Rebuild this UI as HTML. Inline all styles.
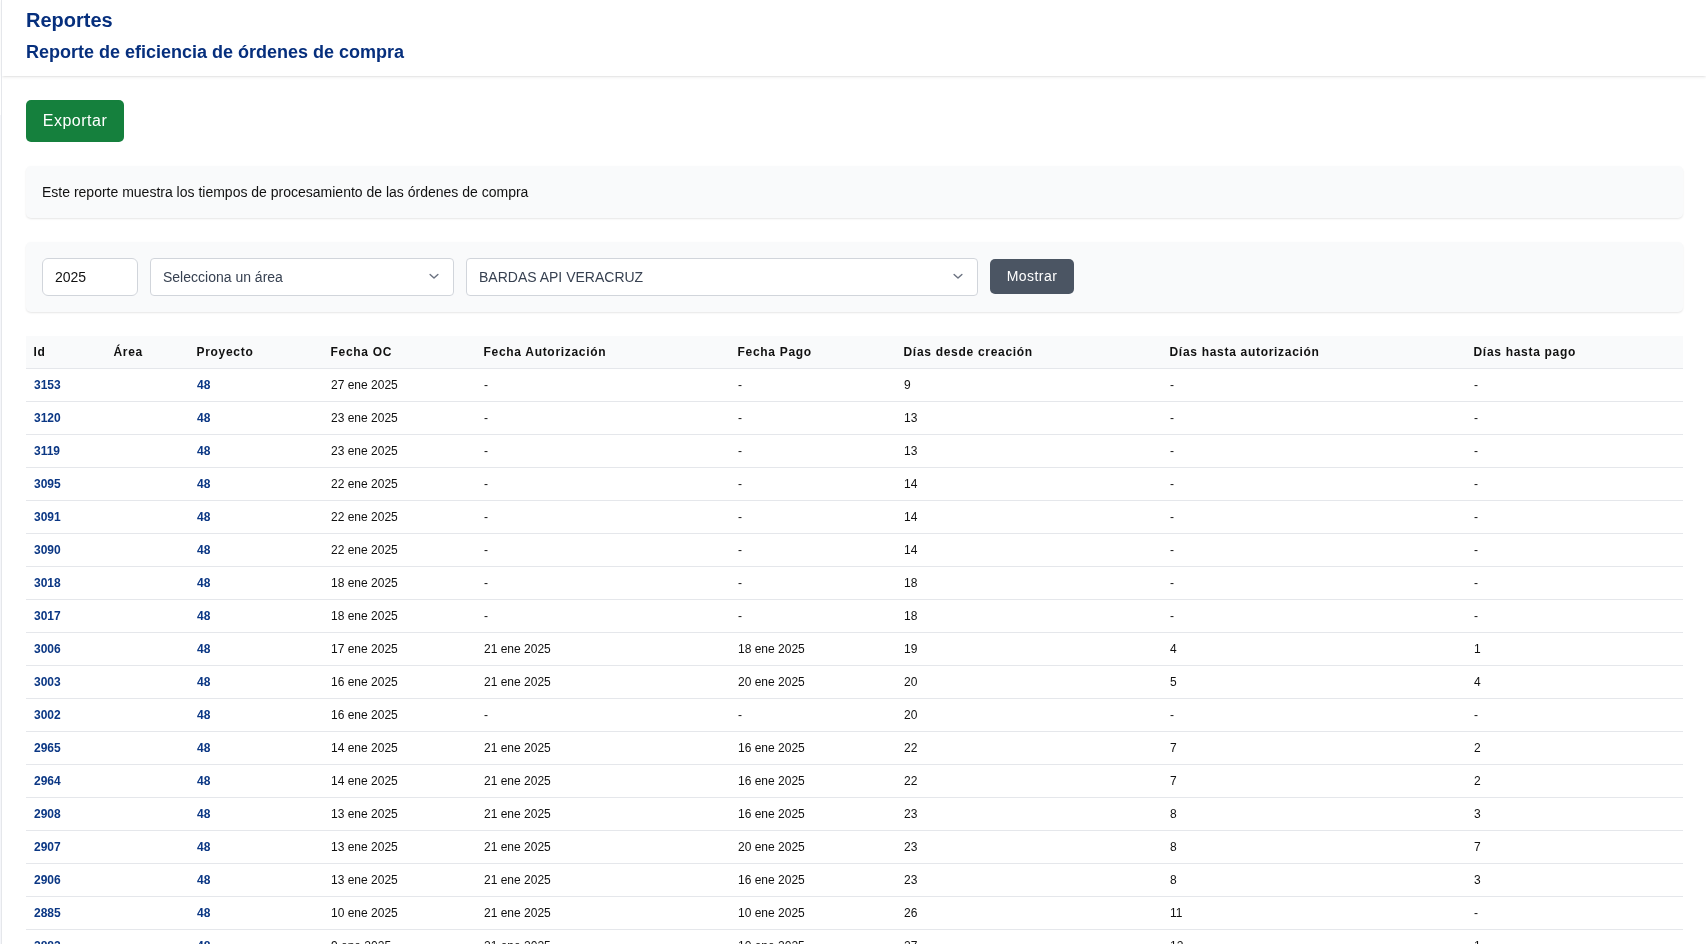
<!DOCTYPE html>
<html lang="es"><head><meta charset="utf-8"><title>Reportes</title>
<style>
*{box-sizing:border-box}
html,body{margin:0;padding:0}body{will-change:transform}
body{width:1706px;height:944px;overflow:hidden;background:#fff;font-family:"Liberation Sans",sans-serif;color:#111827;position:relative}
.side{position:absolute;left:1px;top:0;width:1px;height:944px;background:#e5e7eb;z-index:3}
.hdr{position:absolute;left:2px;top:0;right:0;height:76px;background:#fff;box-shadow:0 1px 3px 0 rgba(0,0,0,0.1),0 1px 2px -1px rgba(0,0,0,0.1)}
.edge{position:absolute;left:0;top:115px;width:1px;height:829px;background:#f5f6fa;z-index:3}
.h1{position:absolute;left:24px;top:8px;margin:0;font-size:20px;font-weight:bold;color:#062f7d;line-height:24px}
.h2{position:absolute;left:24px;top:41px;margin:0;font-size:18px;font-weight:bold;color:#062f7d;line-height:22px}
.btn-exp{position:absolute;left:26px;top:100px;width:98px;height:42px;background:#15803d;color:#fff;border-radius:5px;font-size:16px;line-height:42px;text-align:center;letter-spacing:0.5px}
.info{position:absolute;left:26px;top:166px;width:1657px;height:52px;background:#f9fafb;border-radius:5px;box-shadow:0 1px 2px rgba(0,0,0,0.1);font-size:14px;line-height:52px;padding-left:16px;color:#111}
.filt{position:absolute;left:26px;top:242px;width:1657px;height:70px;background:#f9fafb;border-radius:5px;box-shadow:0 1px 2px rgba(0,0,0,0.1)}
.ctl{position:absolute;top:16px;height:38px;background:#fff;border:1px solid #d1d5db;border-radius:6px;font-size:14px;line-height:36px;padding-left:12px;color:#111}
.sel{color:#374151;border-radius:4px}
.chev{position:absolute;right:13.6px;top:14px}
.btn-m{position:absolute;left:964px;top:17px;width:84px;height:35px;background:#4b5563;color:#fff;border-radius:5px;font-size:14px;line-height:35px;text-align:center;letter-spacing:0.45px}
table{position:absolute;left:26px;top:336px;width:1657px;border-collapse:collapse;table-layout:fixed;font-size:12px}
th{background:#f9fafb;text-align:left;font-weight:bold;letter-spacing:0.7px;padding:0 8px 0 7.5px;height:32px;border-bottom:1px solid #e5e7eb;color:#111}
td{padding:0 8px 0 8px;height:33px;border-bottom:1px solid #e5e7eb;color:#111;white-space:nowrap}
td a{color:#0b3784;font-weight:bold}
</style></head><body>
<div class="side"></div><div class="edge"></div>
<div class="hdr">
<div class="h1">Reportes</div>
<div class="h2">Reporte de eficiencia de órdenes de compra</div>
</div>
<div class="btn-exp">Exportar</div>
<div class="info">Este reporte muestra los tiempos de procesamiento de las órdenes de compra</div>
<div class="filt">
<div class="ctl" style="left:16px;width:96px">2025</div>
<div class="ctl sel" style="left:124px;width:304px">Selecciona un área<svg class="chev" width="10" height="7" viewBox="0 0 10 7"><path d="M1.1 1.4L5 5.1L8.9 1.4" fill="none" stroke="#6b7280" stroke-width="1.4" stroke-linecap="round" stroke-linejoin="round"/></svg></div>
<div class="ctl sel" style="left:440px;width:512px">BARDAS API VERACRUZ<svg class="chev" width="10" height="7" viewBox="0 0 10 7"><path d="M1.1 1.4L5 5.1L8.9 1.4" fill="none" stroke="#6b7280" stroke-width="1.4" stroke-linecap="round" stroke-linejoin="round"/></svg></div>
<div class="btn-m">Mostrar</div>
</div>
<table>
<colgroup><col style="width:80px"><col style="width:83px"><col style="width:134px"><col style="width:153px"><col style="width:254px"><col style="width:166px"><col style="width:266px"><col style="width:304px"><col style="width:217px"></colgroup>
<thead><tr><th>Id</th><th>Área</th><th>Proyecto</th><th>Fecha OC</th><th>Fecha Autorización</th><th>Fecha Pago</th><th>Días desde creación</th><th>Días hasta autorización</th><th>Días hasta pago</th></tr></thead>
<tbody>
<tr><td><a>3153</a></td><td></td><td><a>48</a></td><td>27 ene 2025</td><td>-</td><td>-</td><td>9</td><td>-</td><td>-</td></tr>
<tr><td><a>3120</a></td><td></td><td><a>48</a></td><td>23 ene 2025</td><td>-</td><td>-</td><td>13</td><td>-</td><td>-</td></tr>
<tr><td><a>3119</a></td><td></td><td><a>48</a></td><td>23 ene 2025</td><td>-</td><td>-</td><td>13</td><td>-</td><td>-</td></tr>
<tr><td><a>3095</a></td><td></td><td><a>48</a></td><td>22 ene 2025</td><td>-</td><td>-</td><td>14</td><td>-</td><td>-</td></tr>
<tr><td><a>3091</a></td><td></td><td><a>48</a></td><td>22 ene 2025</td><td>-</td><td>-</td><td>14</td><td>-</td><td>-</td></tr>
<tr><td><a>3090</a></td><td></td><td><a>48</a></td><td>22 ene 2025</td><td>-</td><td>-</td><td>14</td><td>-</td><td>-</td></tr>
<tr><td><a>3018</a></td><td></td><td><a>48</a></td><td>18 ene 2025</td><td>-</td><td>-</td><td>18</td><td>-</td><td>-</td></tr>
<tr><td><a>3017</a></td><td></td><td><a>48</a></td><td>18 ene 2025</td><td>-</td><td>-</td><td>18</td><td>-</td><td>-</td></tr>
<tr><td><a>3006</a></td><td></td><td><a>48</a></td><td>17 ene 2025</td><td>21 ene 2025</td><td>18 ene 2025</td><td>19</td><td>4</td><td>1</td></tr>
<tr><td><a>3003</a></td><td></td><td><a>48</a></td><td>16 ene 2025</td><td>21 ene 2025</td><td>20 ene 2025</td><td>20</td><td>5</td><td>4</td></tr>
<tr><td><a>3002</a></td><td></td><td><a>48</a></td><td>16 ene 2025</td><td>-</td><td>-</td><td>20</td><td>-</td><td>-</td></tr>
<tr><td><a>2965</a></td><td></td><td><a>48</a></td><td>14 ene 2025</td><td>21 ene 2025</td><td>16 ene 2025</td><td>22</td><td>7</td><td>2</td></tr>
<tr><td><a>2964</a></td><td></td><td><a>48</a></td><td>14 ene 2025</td><td>21 ene 2025</td><td>16 ene 2025</td><td>22</td><td>7</td><td>2</td></tr>
<tr><td><a>2908</a></td><td></td><td><a>48</a></td><td>13 ene 2025</td><td>21 ene 2025</td><td>16 ene 2025</td><td>23</td><td>8</td><td>3</td></tr>
<tr><td><a>2907</a></td><td></td><td><a>48</a></td><td>13 ene 2025</td><td>21 ene 2025</td><td>20 ene 2025</td><td>23</td><td>8</td><td>7</td></tr>
<tr><td><a>2906</a></td><td></td><td><a>48</a></td><td>13 ene 2025</td><td>21 ene 2025</td><td>16 ene 2025</td><td>23</td><td>8</td><td>3</td></tr>
<tr><td><a>2885</a></td><td></td><td><a>48</a></td><td>10 ene 2025</td><td>21 ene 2025</td><td>10 ene 2025</td><td>26</td><td>11</td><td>-</td></tr>
<tr><td><a>2882</a></td><td></td><td><a>48</a></td><td>9 ene 2025</td><td>21 ene 2025</td><td>10 ene 2025</td><td>27</td><td>12</td><td>1</td></tr>
</tbody></table>
</body></html>
